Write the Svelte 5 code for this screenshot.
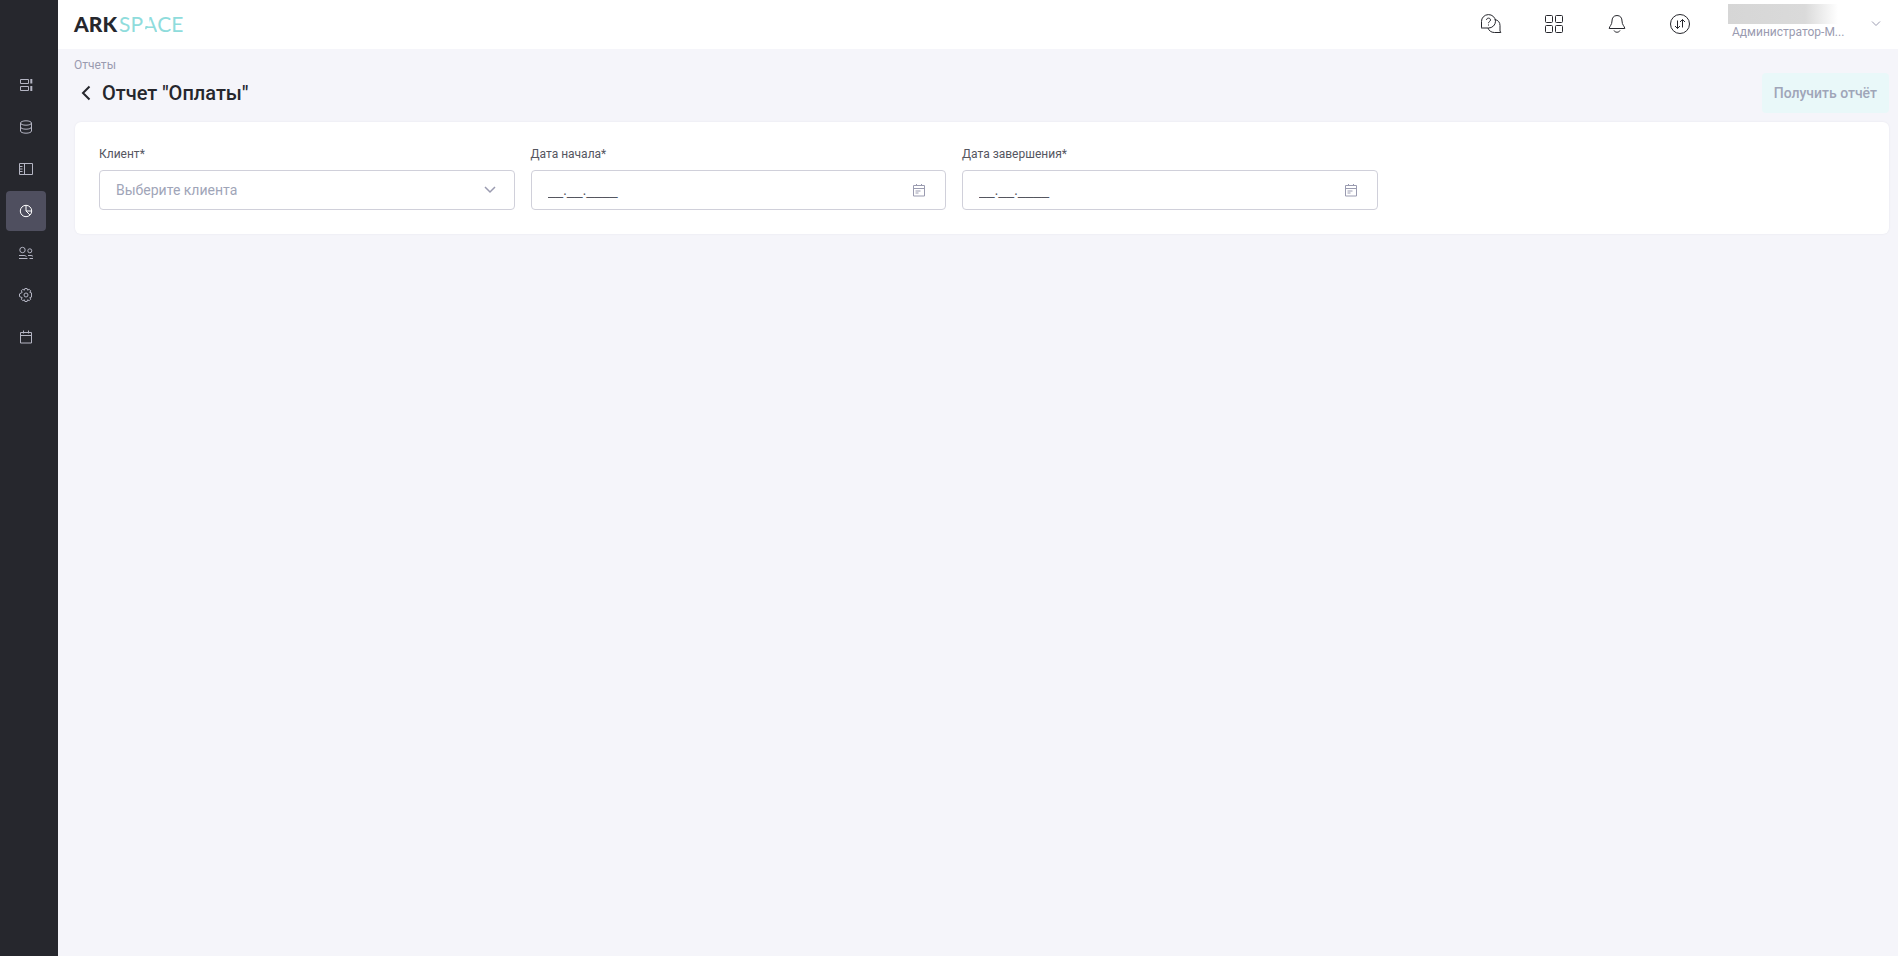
<script lang="ts">
  const nav = [
    { id: 'requests', label: 'Заявки' },
    { id: 'data', label: 'Данные' },
    { id: 'layout', label: 'Панель' },
    { id: 'reports', label: 'Отчеты' },
    { id: 'users', label: 'Пользователи' },
    { id: 'settings', label: 'Настройки' },
    { id: 'calendar', label: 'Календарь' }
  ];

  const dates = [
    { id: 'date-start', label: 'Дата начала*' },
    { id: 'date-end', label: 'Дата завершения*' }
  ];

  let active = $state('reports');
  let client = $state('');
</script>

<div class="app">
  <nav class="sidebar">
    {#each nav as item}
      <a
        href="#{item.id}"
        class="nav-item"
        class:active={active === item.id}
        aria-label={item.label}
        onclick={() => (active = item.id)}
      >
        <svg width="16" height="16" viewBox="0 0 16 16">
          {#if item.id === 'requests'}
            <path d="M2.500 2.500h8v4h-8zM2.500 9.500h8v4h-8z" />
            <path class="thick" d="M13.300 2v4.500M13.300 9v5" />
          {:else if item.id === 'data'}
            <ellipse cx="8" cy="4" rx="5.5" ry="2.2" />
            <path d="M2.500 4v8c0 1.200 2.400 2.200 5.500 2.200s5.500-1 5.500-2.200V4M2.500 8c0 1.200 2.400 2.200 5.500 2.200s5.500-1 5.500-2.200" />
          {:else if item.id === 'layout'}
            <path d="M1.500 2.500h13v11h-13zM6.500 2.500v11M1.500 5.500h3M1.500 8h3M1.500 10.500h3" />
          {:else if item.id === 'reports'}
            <circle cx="8" cy="8" r="5.700" />
            <path d="M8 2.500V8h5.500M8 8l3.900 3.900" />
          {:else if item.id === 'users'}
            <circle cx="4.500" cy="5" r="2.700" />
            <circle cx="11.800" cy="5.800" r="2" />
            <path d="M1 10.500h5c1.500 0 2 .5 2.500 1.500M1 13.500h8.500M10 10.500h3c1 0 1.500.3 2 1M11.500 13.500h3.500" />
          {:else if item.id === 'settings'}
            <circle cx="8" cy="8" r="2" />
            <path d="M6.400 3.200 6.900 1.500h2.200l.5 1.700 1.600-.9 1.500 1.500-.9 1.600 1.700.5v4.200l-1.700.5.9 1.600-1.500 1.500-1.600-.9-.5 1.700H6.900l-.5-1.700-1.600.9-1.500-1.500.9-1.600-2.700-1V6.900l2.700-1.500-.9-1.600 1.500-1.500z" />
          {:else}
            <path d="M2.500 3.500h11v10.500h-11zM2.500 6.500h11M5.500 1.500v3M10.500 1.500v3" />
          {/if}
        </svg>
      </a>
    {/each}
  </nav>

  <div class="page">
    <header class="header">
      <a href="#home" class="logo">ARK<span class="logo-space">SP<span class="cut">A</span>CE</span></a>

      <div class="actions">
        <button class="icon-btn" aria-label="Помощь">
          <svg width="22" height="20" viewBox="0 0 22 20">
            <path d="M1.500 13.500V7.500a7 6.700 0 1 1 7 6.500H1.200zM14.800 5.500c3.500.6 5.200 3 5.200 6v5.500l.8 1.500h-6.300c-3.500 0-5.500-1.800-6.500-4.500" />
            <path d="M6.500 6c0-2.500 4-2.500 4 0 0 1.500-2 1.500-2 3.200M8.500 10.500v1" />
          </svg>
        </button>
        <button class="icon-btn" aria-label="Приложения">
          <svg width="20" height="20" viewBox="0 0 20 20">
            <rect x="1.500" y="1.500" width="7" height="7" rx="1" />
            <rect x="11.500" y="1.500" width="7" height="7" rx="1" />
            <rect x="1.500" y="11.500" width="7" height="7" rx="1" />
            <rect x="11.500" y="11.500" width="7" height="7" rx="1" />
          </svg>
        </button>
        <button class="icon-btn" aria-label="Уведомления">
          <svg width="20" height="20" viewBox="0 0 20 20">
            <path d="M10 1.500c-3.500 0-5 2.500-5 5.500 0 4-2.500 5-2.800 7.500h15.600c-.3-2.500-2.800-3.500-2.800-7.500 0-3-1.500-5.500-5-5.500zM7 16.500c1 2.300 5 2.300 6 0" />
          </svg>
        </button>
        <button class="icon-btn" aria-label="Обмен">
          <svg width="20" height="20" viewBox="0 0 20 20">
            <circle cx="10" cy="10" r="9.500" />
            <path d="M7.500 6.500v8M5 12l2.500 2.500L10 12M12.500 13.500v-8M10 8l2.500-2.500L15 8" />
          </svg>
        </button>
      </div>

      <button class="user">
        <span class="user-text">
          <span class="user-name"></span>
          <span class="user-role">Администратор-М...</span>
        </span>
        <svg width="10" height="6" viewBox="0 0 10 6"><path d="M1 .5l4 4 4-4" /></svg>
      </button>
    </header>

    <main class="main">
      <a href="#reports" class="crumb">Отчеты</a>
      <div class="title-row">
        <button class="back" aria-label="Назад">
          <svg width="10" height="16" viewBox="0 0 10 16"><path d="M8.500 1.500 2 8l6.500 6.500" /></svg>
        </button>
        <h1>Отчет "Оплаты"</h1>
        <button class="submit" disabled>Получить отчёт</button>
      </div>

      <form class="card">
        <div class="field">
          <label for="client">Клиент*</label>
          <div class="control">
            <select id="client" bind:value={client}>
              <option value="">Выберите клиента</option>
            </select>
            <svg class="arrow" width="12" height="8" viewBox="0 0 12 8"><path d="M1 1l5 5 5-5" /></svg>
          </div>
        </div>
        {#each dates as date}
          <div class="field">
            <label for={date.id}>{date.label}</label>
            <div class="control">
              <input id={date.id} type="text" value="__.__.____" />
              <svg class="calendar" width="14" height="14" viewBox="0 0 14 14">
                <path d="M1.500 2.500h11v10.500h-11zM1.500 5.500h11M4.500 1v1.500M9.500 1v1.500M3.500 8h5M3.500 10h3" />
              </svg>
            </div>
          </div>
        {/each}
      </form>
    </main>
  </div>
</div>

<style>
  :global(body) {
    margin: 0;
    background-color: #f5f5fa;
  }

  .app {
    display: flex;
    min-height: 100vh;
    font-family: Roboto, sans-serif;
    color: #26272d;
  }

  svg {
    display: block;
    fill: none;
    stroke: currentColor;
  }

  button {
    padding: 0;
    border: 0;
    background: none;
    font-family: inherit;
    color: inherit;
    cursor: pointer;
  }

  a {
    text-decoration: none;
  }

  .sidebar {
    box-sizing: border-box;
    flex: 0 0 58px;
    display: flex;
    flex-direction: column;
    gap: 2px;
    padding: 65px 12px 0 6px;
    background-color: #26272d;
  }

  .nav-item {
    display: flex;
    align-items: center;
    justify-content: center;
    height: 40px;
    border-radius: 4px;
    color: #b4b5c3;
  }

  .nav-item.active {
    background-color: #4f4f5f;
    color: #ffffff;
  }

  .thick {
    stroke-width: 2;
  }

  .page {
    flex: 1;
    min-width: 0;
  }

  .header {
    box-sizing: border-box;
    display: flex;
    align-items: center;
    height: 49px;
    padding: 0 17px 2px 16px;
    background-color: #ffffff;
  }

  .logo {
    font-family: Lato, sans-serif;
    font-size: 21px;
    line-height: 24px;
    font-weight: 900;
    color: #26272d;
  }

  .logo-space {
    margin-left: 2px;
    font-weight: 400;
    color: #8fdcdc;
  }

  .cut {
    display: inline-block;
    clip-path: polygon(45% 0, 100% 0, 100% 100%, 50% 100%, 50% 74%, 15% 74%, 15% 60%, 45% 60%);
  }

  .actions {
    display: flex;
    gap: 41px;
    margin-left: auto;
  }

  .icon-btn {
    display: flex;
    align-items: center;
    justify-content: center;
    width: 22px;
    height: 22px;
  }

  .user {
    display: flex;
    align-items: center;
    gap: 19px;
    margin-left: 37px;
    color: #9a9bb0;
  }

  .user-text {
    display: flex;
    flex-direction: column;
    width: 124px;
    padding-bottom: 4px;
    text-align: left;
  }

  .user-name {
    width: 110px;
    height: 20px;
    background: linear-gradient(90deg, #d6d6d6, #dadada 70%, #ffffff);
  }

  .user-role {
    padding-left: 4px;
    font-size: 12px;
    line-height: 16px;
  }

  .main {
    padding: 8px 9px 0 16px;
  }

  .crumb {
    display: block;
    font-size: 12px;
    line-height: 16px;
    color: #9a9bb0;
  }

  .title-row {
    display: flex;
    align-items: center;
    height: 40px;
  }

  .back {
    width: 28px;
    padding-left: 7px;
  }

  .back svg {
    stroke-width: 2;
  }

  h1 {
    margin: 0;
    font-size: 20px;
    line-height: 24px;
    font-weight: 500;
  }

  .submit {
    height: 40px;
    margin-left: auto;
    padding: 0 12px;
    border-radius: 4px;
    background-color: #e9f8f9;
    font-size: 14px;
    font-weight: 500;
    color: #9fa5b8;
    cursor: default;
  }

  .card {
    display: grid;
    grid-template-columns: repeat(4, 1fr) 40px;
    gap: 16px;
    margin: 9px 0 0 1px;
    padding: 24px;
    border-radius: 6px;
    background-color: #ffffff;
    box-shadow: 0 0 2px #e4e4ec;
  }

  label {
    display: block;
    margin-bottom: 8px;
    font-size: 12px;
    line-height: 16px;
    color: #55565f;
  }

  .control {
    position: relative;
  }

  select,
  input {
    box-sizing: border-box;
    display: block;
    width: 100%;
    height: 40px;
    padding: 0 16px;
    border: 1px solid #d0d0da;
    border-radius: 4px;
    background-color: #ffffff;
    font-size: 14px;
    appearance: none;
  }

  select {
    font-family: inherit;
    color: #9fa5b8;
  }

  input {
    font-family: 'Liberation Sans', Arial, sans-serif;
    color: #55565f;
  }

  .arrow,
  .calendar {
    position: absolute;
    top: 0;
    bottom: 0;
    margin: auto;
    pointer-events: none;
    color: #9a9bb0;
  }

  .arrow {
    right: 19px;
  }

  .arrow path {
    stroke-width: 1.5;
  }

  .calendar {
    right: 20px;
  }
</style>
